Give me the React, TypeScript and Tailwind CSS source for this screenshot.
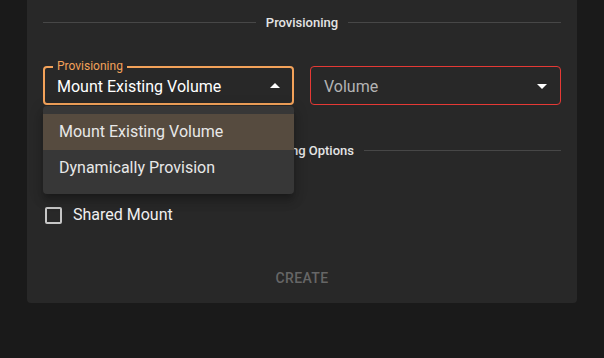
import React from "react";

const font = { fontFamily: "Roboto, 'Liberation Sans', sans-serif" };

const Divider = ({ label }: { label: string }) => (
  <div className="flex items-center gap-[10px] h-5">
    <div className="flex-1 h-px bg-[#474747]" />
    <span className="text-[13px] font-medium text-[#e4e4e4] leading-5 pt-px">{label}</span>
    <div className="flex-1 h-px bg-[#474747]" />
  </div>
);

const Arrow = ({ up }: { up?: boolean }) => (
  <svg width="24" height="24" viewBox="0 0 24 24" className="shrink-0 fill-white">
    <path d={up ? "M7 14l5-5 5 5z" : "M7 10l5 5 5-5z"} />
  </svg>
);

export default function App() {
  return (
    <div style={font} className="min-h-screen bg-[#1a1a1a] px-[27px]">
      <div className="bg-[#282828] rounded-b-[4px] px-4 pt-3 pb-2 h-[303px] flex flex-col">
        <Divider label="Provisioning" />

        <div className="grid grid-cols-2 gap-4 mt-[34px]">
          <div className="relative">
            <div className="relative h-[39px] border-2 border-[#f3a25a] rounded-[4px] flex items-center pl-3 pr-[5px]">
              <span className="absolute top-[-10px] left-[8px] px-1 bg-[#282828] text-xs leading-4 text-[#f3a25a]">
                Provisioning
              </span>
              <span className="flex-1 text-base text-white pt-[2px]">Mount Existing Volume</span>
              <Arrow up />
            </div>
            <div className="absolute z-10 left-0 right-0 top-[40px] bg-[#373737] rounded-[4px] py-2 shadow-[0_5px_5px_-3px_rgba(0,0,0,0.2),0_8px_10px_1px_rgba(0,0,0,0.14),0_3px_14px_2px_rgba(0,0,0,0.12)]">
              <div className="h-9 px-4 flex items-center text-base text-[#e8e8e8] bg-[#564b3f]">
                Mount Existing Volume
              </div>
              <div className="h-9 px-4 flex items-center text-base text-[#e8e8e8]">
                Dynamically Provision
              </div>
            </div>
          </div>
          <div className="h-[39px] border border-[#e53935] rounded-[4px] flex items-center pl-[13px] pr-[6px]">
            <span className="flex-1 text-base text-[#b4b4b4] pt-[2px]">Volume</span>
            <Arrow />
          </div>
        </div>

        <div className="mt-[35px]">
          <Divider label="Mounting Options" />
        </div>

        <label className="flex items-center gap-[11px] mt-[43px] h-6">
          <span className="ml-[2px] w-[17px] h-[17px] border-2 border-[#c6c6c6] rounded-[2px]" />
          <span className="text-base text-[#f0f0f0]">Shared Mount</span>
        </label>

        <div className="mt-auto flex justify-center">
          <button className="h-9 px-2 pt-[2px] text-sm font-medium tracking-[0.4px] uppercase text-[#666666]">
            Create
          </button>
        </div>
      </div>
    </div>
  );
}
